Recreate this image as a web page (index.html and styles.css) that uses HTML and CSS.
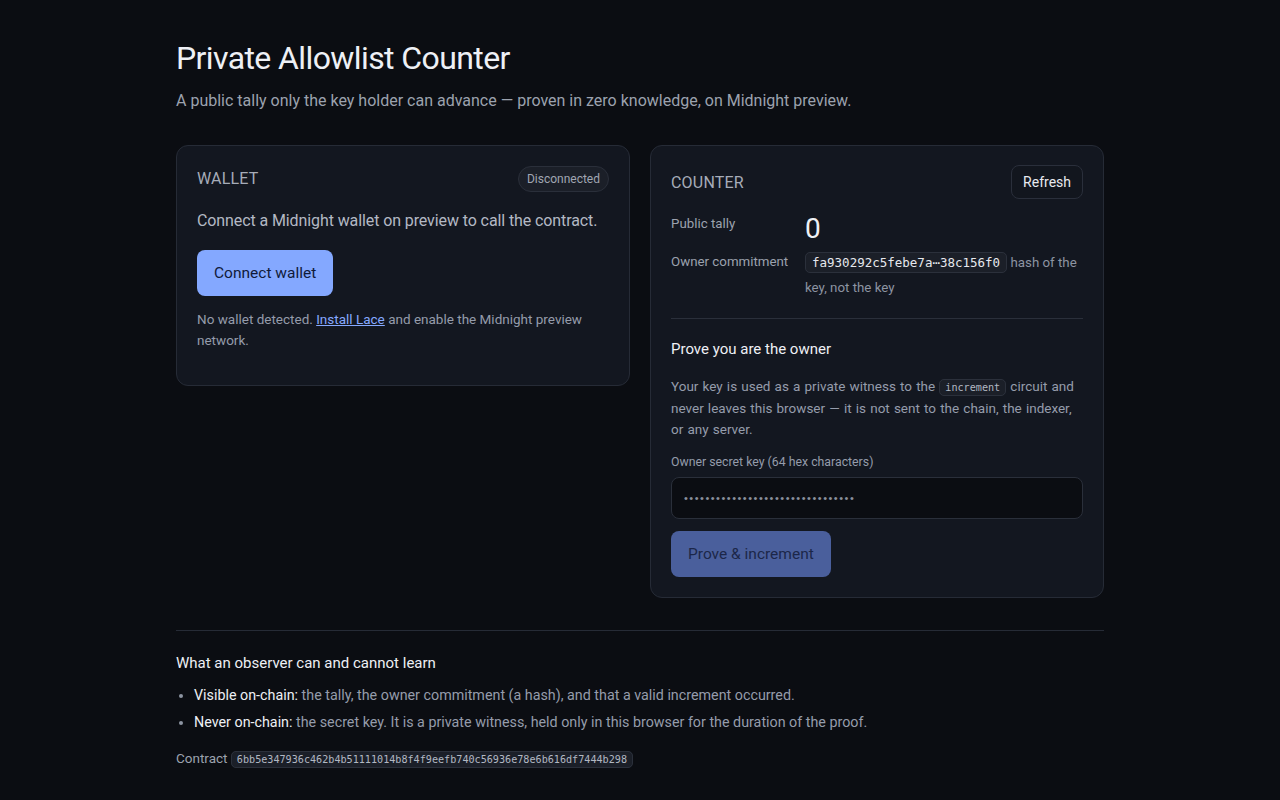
FILE: index.html
```html
<!DOCTYPE html>
<html lang="en">
<head>
  <meta charset="UTF-8">
  <meta name="viewport" content="width=device-width, initial-scale=1.0">
  <title>Private Allowlist Counter</title>
  <link rel="stylesheet" href="styles.css">
</head>
<body>
  <main class="page">
    <header class="intro">
      <h1>Private Allowlist Counter</h1>
      <p class="lead">A public tally only the key holder can advance — proven in zero knowledge, on Midnight preview.</p>
    </header>

    <div class="cards">
      <!-- Wallet -->
      <section class="card wallet">
        <div class="card-head">
          <h2>Wallet</h2>
          <span class="pill">Disconnected</span>
        </div>
        <p class="wallet-text">Connect a Midnight wallet on preview to call the contract.</p>
        <button class="btn primary">Connect wallet</button>
        <p class="note">No wallet detected. <a href="#">Install Lace</a> and enable the Midnight preview network.</p>
      </section>

      <!-- Counter -->
      <section class="card counter">
        <div class="card-head">
          <h2>Counter</h2>
          <button class="btn ghost">Refresh</button>
        </div>
        <dl class="facts">
          <dt>Public tally</dt>
          <dd class="tally">0</dd>
          <dt>Owner commitment</dt>
          <dd><code class="chip">fa930292c5febe7a⋯38c156f0</code> <span class="muted">hash of the key, not the key</span></dd>
        </dl>

        <div class="prove">
          <h3>Prove you are the owner</h3>
          <p class="note">Your key is used as a private witness to the <code class="chip small">increment</code> circuit and never leaves this browser — it is not sent to the chain, the indexer, or any server.</p>
          <label class="field-label" for="secret">Owner secret key (64 hex characters)</label>
          <input id="secret" class="field" type="password" value="00000000000000000000000000000000">
          <button class="btn primary disabled">Prove &amp; increment</button>
        </div>
      </section>
    </div>

    <footer class="observer">
      <h3>What an observer can and cannot learn</h3>
      <ul>
        <li><strong>Visible on-chain:</strong> the tally, the owner commitment (a hash), and that a valid increment occurred.</li>
        <li><strong>Never on-chain:</strong> the secret key. It is a private witness, held only in this browser for the duration of the proof.</li>
      </ul>
      <p class="contract">Contract <code class="chip small">6bb5e347936c462b4b51111014b8f4f9eefb740c56936e78e6b616df7444b298</code></p>
    </footer>
  </main>
</body>
</html>
```

FILE: styles.css
```css
* {
  box-sizing: border-box;
}

body {
  margin: 0;
  background: #0b0d12;
  color: #e6e8ee;
  font-family: Roboto, Inter, "Noto Sans", sans-serif;
}

.page {
  width: 928px;
  margin: 0 auto;
  padding: 38px 0 30px;
}

h1 {
  margin: 0;
  font-size: 32px;
  font-weight: 400;
  letter-spacing: -0.6px;
  color: #eef0f5;
  line-height: 40px;
}

.lead {
  margin: 13px 0 0;
  font-size: 16px;
  color: #9ca2ae;
}

.cards {
  display: grid;
  grid-template-columns: 1fr 1fr;
  gap: 20px;
  align-items: start;
  margin-top: 35px;
}

.card {
  background: #131720;
  border: 1px solid #262b36;
  border-radius: 12px;
  padding: 20px;
}

.card-head {
  display: flex;
  justify-content: space-between;
  align-items: center;
}

.card h2 {
  margin: 0;
  font-size: 16px;
  font-weight: 400;
  text-transform: uppercase;
  color: #a6acb8;
  letter-spacing: 0.2px;
}

.pill {
  font-size: 12px;
  color: #a0a6b2;
  background: #1b1f28;
  border: 1px solid #2a2f3a;
  border-radius: 999px;
  padding: 5px 8px;
}

.wallet .card-head {
  height: 25px;
}

.wallet-text {
  margin: 20px 0 0;
  font-size: 16px;
  letter-spacing: -0.1px;
  color: #b3b9c4;
}

.btn {
  font-family: inherit;
  border-radius: 8px;
  cursor: pointer;
}

.btn.primary {
  display: block;
  height: 46px;
  padding: 0 17px;
  font-size: 15.5px;
  background: #84a8ff;
  color: #101a3a;
  border: none;
}

.btn.primary.disabled {
  background: #4a5f9c;
  color: #1c2749;
  cursor: default;
}

.btn.ghost {
  height: 34px;
  padding: 0 11px;
  font-size: 14px;
  background: #12161e;
  color: #e8eaf0;
  border: 1px solid #2a2f3b;
}

.wallet .btn.primary {
  margin-top: 20px;
}

.note {
  font-size: 13.5px;
  line-height: 21px;
  color: #959cab;
}

.wallet .note {
  margin: 13px 0 14px;
}

.note a {
  color: #86a9ff;
}

.counter .card-head {
  margin-top: -1px;
}

.facts {
  display: grid;
  grid-template-columns: 134px 1fr;
  margin: 13px 0 0;
  row-gap: 6px;
}

.facts dt {
  font-size: 13.3px;
  color: #9ca2ae;
  padding-top: 4px;
}

.facts dd {
  margin: 0;
  font-size: 13.3px;
  line-height: 25px;
}

.facts .tally {
  font-size: 28px;
  line-height: 30px;
  padding-top: 2px;
  color: #eef0f5;
}

.muted {
  color: #8d94a2;
}

code.chip {
  font-family: "DejaVu Sans Mono", "Liberation Mono", monospace;
  font-size: 12.5px;
  color: #e6e8ee;
  background: #1b1f28;
  border: 1px solid #2b303b;
  border-radius: 5px;
  padding: 2px 6px;
}

code.chip.small {
  font-size: 10.15px;
  color: #b2b8c3;
  padding: 2px 5px;
}

.prove {
  border-top: 1px solid #2a2f3a;
  margin-top: 18px;
  padding-top: 21px;
}

.prove h3 {
  margin: 0;
  font-size: 15px;
  font-weight: 400;
  color: #eef0f5;
}

.prove .note {
  margin: 18px 0 0;
  word-spacing: 0.8px;
}

.field-label {
  display: block;
  margin-top: 15px;
  font-size: 12.3px;
  color: #959cab;
}

.field {
  display: block;
  width: 100%;
  height: 42px;
  margin-top: 8px;
  padding: 0 12px;
  background: #0b0d12;
  border: 1px solid #2a2f3a;
  border-radius: 8px;
  color: #8a909c;
  font-size: 11px;
  letter-spacing: 1.5px;
}

.prove .btn.primary {
  margin-top: 12px;
}

.observer {
  margin-top: 32px;
  border-top: 1px solid #262b36;
  padding-top: 23px;
}

.observer h3 {
  margin: 0;
  font-size: 15px;
  font-weight: 400;
  color: #eef0f5;
}

.observer ul {
  margin: 10px 0 0;
  padding-left: 18px;
  font-size: 14.3px;
  color: #959cab;
}

.observer li {
  line-height: 27px;
}

.observer li::marker {
  color: #8d94a2;
}

.observer strong {
  font-weight: 400;
  color: #eef0f5;
}

.contract {
  margin: 14px 0 0;
  font-size: 13.5px;
  color: #9ca2ae;
}
```
